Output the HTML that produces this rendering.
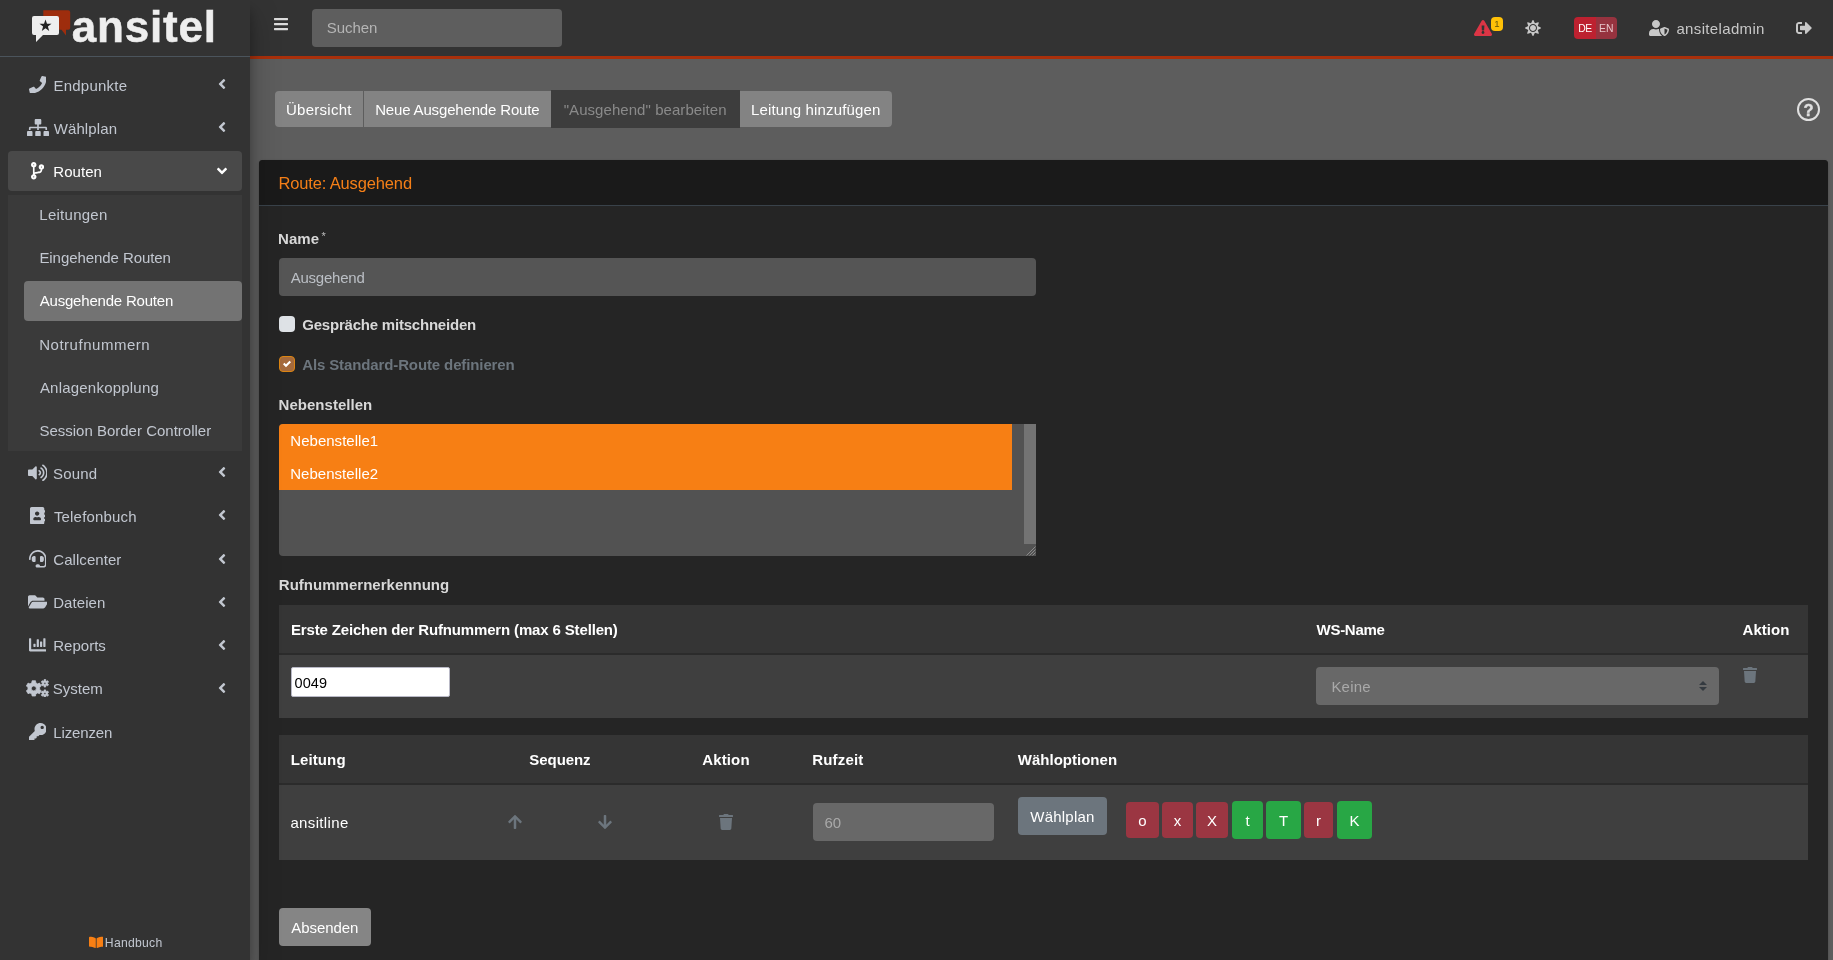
<!DOCTYPE html>
<html lang="de">
<head>
<meta charset="utf-8">
<title>ansitel - Ausgehende Routen</title>
<style>
*{box-sizing:border-box}
html,body{margin:0;padding:0}
body{width:1833px;height:960px;overflow:hidden;position:relative;background:#5d5d5d;font-family:"Liberation Sans",sans-serif;font-size:15px;line-height:24px;color:#fff}
#root{position:absolute;left:0;top:0;width:1833px;height:960px;overflow:hidden;will-change:transform}
svg{display:block}
.abs{position:absolute}
.f{position:relative;white-space:nowrap;display:inline-block}
/* ---------- sidebar ---------- */
#sidebar{position:absolute;left:0;top:0;width:250px;height:960px;background:#333;z-index:20;box-shadow:0 14px 28px rgba(0,0,0,.25),0 10px 10px rgba(0,0,0,.22)}
#brand{position:absolute;left:0;top:0;width:250px;height:57px;border-bottom:1px solid #4b545c}
#brand .word{position:absolute;left:72px;top:-1px;font-weight:bold;font-size:44px;line-height:56px;color:#eee;-webkit-text-stroke:0.5px #eee}
#brand svg{position:absolute;left:31px;top:9px}
.nav{position:absolute;left:8px;top:65px;width:234px;margin:0;padding:0;list-style:none}
.nav li{position:relative;height:40px;margin-bottom:3.2px;border-radius:4px;color:#c2c7d0}
.nav li .t{position:absolute;left:45.6px;top:8.5px;line-height:24px;white-space:nowrap}
.nav li .ic{position:absolute;left:16.8px;top:-0.5px;width:25.6px;height:40px;display:flex;align-items:center;justify-content:center}
.nav li svg{fill:#c2c7d0;stroke:#c2c7d0;stroke-width:0}
.nav li .ar{position:absolute;right:16px;top:11.2px}
.nav li.open{background:#494949;color:#fff}
.nav li.open svg{fill:#fff}
.tree{position:absolute;left:8px;top:194.6px;width:234px;height:256px;background:#3a3a3a;margin:0;padding:0;list-style:none}
.tree li{position:absolute;left:16px;width:218px;height:40px;border-radius:4px;color:#c2c7d0}
.tree li .t{position:absolute;left:16px;top:8.5px;white-space:nowrap}
.tree li.act{background:#737373;color:#fff}
#hand{position:absolute;left:88.5px;top:933.7px;font-size:12.2px;line-height:18px;color:#c2c7d0;white-space:nowrap}
#hand .t{position:absolute;left:17px;top:0}
/* ---------- navbar ---------- */
#navbar{position:absolute;left:250px;top:0;width:1583px;height:59px;background:#333;border-bottom:3px solid #a9300b;z-index:10}
#search{position:absolute;left:62px;top:9px;width:250px;height:38px;border-radius:4px;background:#5e5e5e;color:#b5b5b5}
#search .t{position:absolute;left:15px;top:6.5px}
#nbadge{position:absolute;left:1241px;top:17px;width:12px;height:14px;border-radius:4px;background:#ffc107;color:#66560a;font-size:9.6px;line-height:13px;text-align:center}
#lang{position:absolute;left:1324px;top:17px;width:43px;height:22px;border-radius:4px;overflow:hidden;font-size:10.4px;line-height:22px;color:#fff}
#lang b{position:absolute;left:0;top:0;width:22px;height:22px;background:#bd2130;font-weight:normal}
#lang i{position:absolute;left:22px;top:0;width:21px;height:22px;background:#96333f;font-style:normal;color:#e6c4c8}
#lang .f{position:absolute;left:4px;top:0.5px}
#uname{position:absolute;left:1426px;top:16.5px;line-height:24px;color:#c8c8c8;white-space:nowrap}
#help{position:absolute;left:1797px;top:97.5px;width:23px;height:23px;border:2.4px solid #e0e0e0;border-radius:50%;color:#e0e0e0;font-weight:bold;font-size:16.5px;line-height:20px;text-align:center;-webkit-text-stroke:0.4px #e0e0e0}
/* ---------- content ---------- */
.tab{position:absolute;top:91px;height:36px;background:#838383;color:#fff}
.tab .f{position:absolute;top:7px}
.tab.cur{top:90px;height:38px;background:#3d3d3d;color:#8a8a8a}
.tab.cur .f{top:8px}
#card{position:absolute;left:259px;top:160px;width:1569px;height:820px;background:#252525;border-radius:4px;box-shadow:0 0 1px rgba(0,0,0,.125),0 1px 3px rgba(0,0,0,.2)}
#card .hd{position:absolute;left:0;top:0;width:100%;height:46px;background:#1a1a1a;border-bottom:1px solid #39424a;border-radius:4px 4px 0 0}
#card .hd .f{position:absolute;left:20px;top:10.5px;font-size:16.5px;line-height:24px;color:#f57f17}
.lbl{position:absolute;font-weight:bold;color:#d8d8d8;white-space:nowrap;line-height:24px}
.inp{position:absolute;background:#555;border-radius:4px;color:#bbbfc5;line-height:24px}
.inp .f{position:absolute;left:12px;top:7.5px}
.star{position:absolute;left:42.5px;top:-2.5px;font-weight:normal;font-size:11px;color:#bdbdbd}
.cb{position:absolute;width:16px;height:16px;border-radius:4px;background:#dee2e6}
.cb.on{background:#a56a3c;border:1px solid #dc8512}
.cb.on svg{position:absolute;left:3px;top:3px}
#multi{position:absolute;left:279px;top:424px;width:757px;height:132px;background:#525252;border-radius:4px 0 0 4px;overflow:hidden}
#multi .opt{position:absolute;left:0;width:733px;height:33px;background:#f77f14;color:#fff;line-height:24px}
#multi .opt .f{position:absolute;left:12px;top:5px}
#multi .track{position:absolute;left:745px;top:0;width:12px;height:120px;background:#737373}
#multi .rsz{position:absolute;left:745px;top:120px}
.th{position:absolute;height:50px;background:#353535;border-bottom:2px solid #2b2b2b}
.th .f{position:absolute;top:12.5px;font-weight:bold;color:#fff;line-height:24px}
.tr{position:absolute;background:#3f3f3f}
#num{position:absolute;left:291px;top:667px;width:159px;height:30px;background:#fff;border:1px solid #b9b9c6;border-radius:2px;color:#000;line-height:24px;font-size:14.5px}
#num .f{position:absolute;left:3px;top:2.5px}
.inp.sel{background:#686868;color:#a9a9a9}
.inp.sel .f{left:16px;top:7.5px}
.btn2{position:absolute;height:38px;border-radius:4px;background:#6c757d;color:#fff;line-height:24px}
.btn2 .f{position:absolute;left:12px;top:7.5px}
.bdg{position:absolute;top:802px;height:36px;border-radius:4px;color:#fff;text-align:center;line-height:37px}
.red{background:#9b3642}.grn{background:#28a745;top:801px;height:38px;line-height:39px}
</style>
</head>
<body>
<div id="root">

<div id="sidebar">
  <div id="brand">
    <svg width="42" height="36" viewBox="0 0 42 36">
      <path d="M12.300 1.200h24.900a2 2 0 0 1 2 2v15.600a2 2 0 0 1-2 2H35v5.700l-4.500-5.700H12.300z" fill="#9e2d0d"/>
      <path d="M3 7h23a2 2 0 0 1 2 2v15a2 2 0 0 1-2 2H12l-7 7v-7H3a2 2 0 0 1-2-2V9a2 2 0 0 1 2-2z" fill="#eee"/>
      <path d="M14.500 10.500l1.500 4.300h4.500l-3.600 2.700 1.300 4.400-3.700-2.600-3.700 2.600 1.300-4.400-3.600-2.700h4.500z" fill="#222"/>
    </svg>
    <span class="word"><span class="f" style="letter-spacing:0.79px;margin-left:-0.2px">ansitel</span></span>
  </div>
  <ul class="nav">
    <li><span class="ic"><svg width="17.6" height="17.6" viewBox="0 0 512 512"><path d="M493.4 24.600l-104-24c-11.300-2.600-22.900 3.300-27.500 13.900l-48 112c-4.200 9.800-1.400 21.300 6.900 28l60.600 49.600c-36 76.700-98.900 140.500-177.200 177.200l-49.600-60.600c-6.800-8.300-18.200-11.100-28-6.900l-112 48C3.900 366.500-2 378.100.600 389.400l24 104C27.100 504.200 36.700 512 48 512c256.100 0 464-207.500 464-464 0-11.200-7.700-20.900-18.600-23.400z"/></svg></span><span class="t"><span class="f" style="letter-spacing:0.24px;margin-left:-0.2px">Endpunkte</span></span><svg class="ar" width="8.0" height="16" viewBox="0 0 256 512"><path d="M31.7 239l136-136c9.4-9.4 24.6-9.4 33.900 0l22.600 22.600c9.400 9.400 9.400 24.600 0 33.900L127.900 256l96.400 96.400c9.400 9.400 9.400 24.600 0 33.900L201.700 409c-9.400 9.400-24.600 9.400-33.900 0l-136-136c-9.500-9.400-9.500-24.600-.1-34z"/></svg></li>
    <li><span class="ic"><svg width="22.0" height="17.6" viewBox="0 0 640 512"><path d="M128 352H32c-17.670 0-32 14.330-32 32v96c0 17.670 14.330 32 32 32h96c17.670 0 32-14.330 32-32v-96c0-17.670-14.330-32-32-32zm-24-80h192v48h48v-48h192v48h48v-57.590c0-21.170-17.230-38.410-38.410-38.410H344v-64h40c17.670 0 32-14.330 32-32V32c0-17.670-14.330-32-32-32H256c-17.670 0-32 14.330-32 32v96c0 17.670 14.330 32 32 32h40v64H94.410C73.230 224 56 241.230 56 262.410V320h48v-48zm264 80h-96c-17.670 0-32 14.330-32 32v96c0 17.670 14.330 32 32 32h96c17.670 0 32-14.330 32-32v-96c0-17.670-14.330-32-32-32zm240 0h-96c-17.670 0-32 14.330-32 32v96c0 17.670 14.330 32 32 32h96c17.670 0 32-14.330 32-32v-96c0-17.670-14.330-32-32-32z"/></svg></span><span class="t"><span class="f" style="letter-spacing:0.11px;margin-left:0.1px">Wählplan</span></span><svg class="ar" width="8.0" height="16" viewBox="0 0 256 512"><path d="M31.7 239l136-136c9.4-9.4 24.6-9.4 33.900 0l22.600 22.600c9.400 9.400 9.400 24.600 0 33.900L127.900 256l96.400 96.400c9.400 9.400 9.400 24.600 0 33.900L201.700 409c-9.400 9.400-24.600 9.400-33.900 0l-136-136c-9.500-9.400-9.500-24.600-.1-34z"/></svg></li>
    <li class="open"><span class="ic"><svg width="13.2" height="17.6" viewBox="0 0 384 512"><path d="M384 144c0-44.200-35.800-80-80-80s-80 35.800-80 80c0 36.400 24.300 67.100 57.500 76.800-.6 16.100-4.200 28.500-11 36.900-15.400 19.200-49.300 22.400-85.200 25.700-28.200 2.600-57.400 5.400-81.300 16.900v-144c32.500-10.200 56-40.500 56-76.300 0-44.200-35.800-80-80-80S0 35.800 0 80c0 35.800 23.500 66.100 56 76.300v199.300C23.500 365.900 0 396.200 0 432c0 44.200 35.800 80 80 80s80-35.800 80-80c0-34-21.200-63.100-51.200-74.600 3.100-5.200 7.800-9.800 14.900-13.400 16.200-8.200 40.400-10.400 66.100-12.800 42.200-3.900 90-8.400 118.200-43.400 14-17.400 21.100-39.800 21.600-67.900 31.600-10.800 54.400-40.700 54.400-75.900zM80 64c8.800 0 16 7.200 16 16s-7.200 16-16 16-16-7.200-16-16 7.200-16 16-16zm0 384c-8.800 0-16-7.200-16-16s7.200-16 16-16 16 7.200 16 16-7.200 16-16 16zm224-320c8.800 0 16 7.200 16 16s-7.200 16-16 16-16-7.200-16-16 7.200-16 16-16z"/></svg></span><span class="t"><span class="f" style="letter-spacing:0.05px;margin-left:-0.3px">Routen</span></span><svg class="ar" style="transform:rotate(-90deg)" width="8.0" height="16" viewBox="0 0 256 512"><path d="M31.7 239l136-136c9.4-9.4 24.6-9.4 33.900 0l22.600 22.600c9.400 9.400 9.400 24.600 0 33.900L127.900 256l96.400 96.400c9.400 9.400 9.400 24.600 0 33.900L201.700 409c-9.400 9.400-24.600 9.400-33.900 0l-136-136c-9.500-9.400-9.500-24.600-.1-34z"/></svg></li>
  </ul>
  <ul class="tree">
    <li style="top:0"><span class="t"><span class="f" style="letter-spacing:0.26px;margin-left:-0.7px">Leitungen</span></span></li>
    <li style="top:43.2px"><span class="t"><span class="f" style="letter-spacing:-0.07px;margin-left:-0.6px">Eingehende Routen</span></span></li>
    <li style="top:86.4px" class="act"><span class="t"><span class="f" style="letter-spacing:-0.20px;margin-left:-0.3px">Ausgehende Routen</span></span></li>
    <li style="top:129.6px"><span class="t"><span class="f" style="letter-spacing:0.52px;margin-left:-0.8px">Notrufnummern</span></span></li>
    <li style="top:172.8px"><span class="t"><span class="f" style="letter-spacing:0.21px;margin-left:-0.1px">Anlagenkopplung</span></span></li>
    <li style="top:216px"><span class="t"><span class="f" style="margin-left:-0.6px">Session Border Controller</span></span></li>
  </ul>
  <ul class="nav" style="top:453px">
    <li><span class="ic"><svg width="19.8" height="17.6" viewBox="0 0 576 512"><path d="M215.030 71.050L126.060 160H24c-13.260 0-24 10.740-24 24v144c0 13.250 10.740 24 24 24h102.060l88.970 88.950c15.030 15.030 40.970 4.470 40.970-16.970V88.020c0-21.460-25.960-31.980-40.970-16.970zm233.320-51.080c-11.170-7.330-26.180-4.240-33.510 6.950-7.340 11.170-4.220 26.180 6.950 33.510 66.270 43.490 105.820 116.600 105.820 195.580 0 78.980-39.550 152.090-105.820 195.580-11.170 7.320-14.290 22.340-6.950 33.500 7.040 10.710 21.930 14.560 33.510 6.950C528.270 439.580 576 351.330 576 256S528.270 72.430 448.350 19.970zM480 256c0-63.530-32.060-121.940-85.770-156.240-11.190-7.140-26.030-3.820-33.120 7.460s-3.780 26.210 7.410 33.360C408.270 165.970 432 209.110 432 256s-23.730 90.030-63.480 115.420c-11.190 7.140-14.500 22.070-7.410 33.360 6.510 10.360 21.120 15.140 33.120 7.460C447.940 377.940 480 319.540 480 256zm-141.770-76.870c-11.580-6.330-26.190-2.160-32.610 9.450-6.390 11.610-2.160 26.200 9.450 32.610C327.980 228.280 336 241.630 336 256c0 14.380-8.020 27.720-20.920 34.810-11.610 6.410-15.840 21-9.450 32.610 6.430 11.660 21.050 15.800 32.610 9.450 28.230-15.550 45.770-45 45.770-76.880s-17.540-61.320-45.780-76.860z"/></svg></span><span class="t"><span class="f" style="letter-spacing:0.21px;margin-left:-0.6px">Sound</span></span><svg class="ar" width="8.0" height="16" viewBox="0 0 256 512"><path d="M31.7 239l136-136c9.4-9.4 24.6-9.4 33.900 0l22.600 22.600c9.400 9.400 9.400 24.600 0 33.900L127.900 256l96.400 96.400c9.400 9.400 9.400 24.600 0 33.900L201.700 409c-9.400 9.400-24.600 9.400-33.900 0l-136-136c-9.500-9.400-9.500-24.600-.1-34z"/></svg></li>
    <li><span class="ic"><svg width="15.4" height="17.6" viewBox="0 0 448 512"><path d="M436 160c6.600 0 12-5.400 12-12v-40c0-6.600-5.400-12-12-12h-20V48c0-26.500-21.500-48-48-48H48C21.500 0 0 21.500 0 48v416c0 26.500 21.500 48 48 48h320c26.500 0 48-21.500 48-48v-48h20c6.600 0 12-5.400 12-12v-40c0-6.600-5.400-12-12-12h-20v-64h20c6.600 0 12-5.400 12-12v-40c0-6.600-5.400-12-12-12h-20v-64h20zm-228-32c35.300 0 64 28.700 64 64s-28.700 64-64 64-64-28.700-64-64 28.700-64 64-64zm112 236.800c0 10.600-10 19.200-22.400 19.200H118.400C106 384 96 375.400 96 364.800v-19.200c0-31.800 30.100-57.600 67.200-57.600h5c12.300 5.100 25.700 8 39.800 8s27.600-2.900 39.800-8h5c37.100 0 67.200 25.800 67.200 57.600v19.200z"/></svg></span><span class="t"><span class="f" style="letter-spacing:0.18px;margin-left:0.3px">Telefonbuch</span></span><svg class="ar" width="8.0" height="16" viewBox="0 0 256 512"><path d="M31.7 239l136-136c9.4-9.4 24.6-9.4 33.900 0l22.600 22.600c9.400 9.400 9.400 24.600 0 33.900L127.900 256l96.400 96.400c9.400 9.400 9.400 24.600 0 33.900L201.700 409c-9.400 9.400-24.600 9.400-33.900 0l-136-136c-9.500-9.400-9.500-24.600-.1-34z"/></svg></li>
    <li><span class="ic"><svg width="17.6" height="17.6" viewBox="0 0 512 512"><path d="M192 208c0-17.670-14.330-32-32-32h-16c-35.350 0-64 28.650-64 64v48c0 35.350 28.650 64 64 64h16c17.670 0 32-14.330 32-32V208zm176 144c35.350 0 64-28.650 64-64v-48c0-35.350-28.650-64-64-64h-16c-17.670 0-32 14.330-32 32v112c0 17.670 14.330 32 32 32h16zM256 0C113.180 0 4.580 118.830 0 256v16c0 8.840 7.160 16 16 16h16c8.840 0 16-7.160 16-16v-16c0-114.690 93.310-208 208-208s208 93.310 208 208h-.12c.08 2.430.12 165.720.12 165.720 0 23.350-18.930 42.280-42.280 42.280H320c0-26.510-21.490-48-48-48h-32c-26.510 0-48 21.490-48 48s21.490 48 48 48h181.720c49.860 0 90.280-40.420 90.280-90.280V256C507.420 118.830 398.820 0 256 0z"/></svg></span><span class="t"><span class="f" style="letter-spacing:0.05px;margin-left:-0.3px">Callcenter</span></span><svg class="ar" width="8.0" height="16" viewBox="0 0 256 512"><path d="M31.7 239l136-136c9.4-9.4 24.6-9.4 33.900 0l22.600 22.600c9.400 9.400 9.400 24.600 0 33.900L127.900 256l96.400 96.400c9.400 9.400 9.400 24.600 0 33.900L201.700 409c-9.400 9.400-24.600 9.400-33.900 0l-136-136c-9.500-9.400-9.500-24.600-.1-34z"/></svg></li>
    <li><span class="ic"><svg width="19.8" height="17.6" viewBox="0 0 576 512"><path d="M572.694 292.093L500.270 416.248A63.997 63.997 0 0 1 444.989 448H45.025c-18.523 0-30.064-20.093-20.731-36.093l72.424-124.155A64 64 0 0 1 152 256h399.964c18.523 0 30.064 20.093 20.730 36.093zM152 224h328v-48c0-26.510-21.490-48-48-48H272l-64-64H48C21.490 64 0 85.490 0 112v278.046l69.077-118.418C86.214 242.250 117.989 224 152 224z"/></svg></span><span class="t"><span class="f" style="letter-spacing:0.06px;margin-left:-0.4px">Dateien</span></span><svg class="ar" width="8.0" height="16" viewBox="0 0 256 512"><path d="M31.7 239l136-136c9.4-9.4 24.6-9.4 33.900 0l22.600 22.600c9.400 9.400 9.400 24.600 0 33.900L127.900 256l96.400 96.400c9.400 9.400 9.400 24.600 0 33.900L201.700 409c-9.400 9.400-24.600 9.400-33.900 0l-136-136c-9.500-9.400-9.500-24.600-.1-34z"/></svg></li>
    <li><span class="ic"><svg width="17.6" height="17.6" viewBox="0 0 512 512"><path d="M332.800 320h38.400c6.400 0 12.800-6.400 12.800-12.800V172.800c0-6.400-6.400-12.800-12.800-12.800h-38.400c-6.400 0-12.800 6.400-12.800 12.800v134.400c0 6.400 6.400 12.800 12.800 12.800zm96 0h38.400c6.400 0 12.800-6.400 12.800-12.800V76.800c0-6.400-6.400-12.800-12.800-12.800h-38.400c-6.400 0-12.800 6.400-12.800 12.800v230.400c0 6.400 6.400 12.800 12.800 12.800zm-288 0h38.400c6.400 0 12.800-6.400 12.800-12.800v-70.400c0-6.400-6.400-12.800-12.800-12.800h-38.400c-6.400 0-12.800 6.400-12.800 12.800v70.400c0 6.400 6.400 12.800 12.800 12.800zm96 0h38.400c6.400 0 12.800-6.400 12.800-12.800V108.800c0-6.400-6.400-12.800-12.800-12.800h-38.400c-6.400 0-12.800 6.400-12.800 12.800v198.400c0 6.400 6.400 12.800 12.800 12.800zM496 384H64V80c0-8.840-7.160-16-16-16H16C7.160 64 0 71.160 0 80v336c0 17.670 14.330 32 32 32h464c8.840 0 16-7.160 16-16v-32c0-8.840-7.160-16-16-16z"/></svg></span><span class="t"><span class="f" style="letter-spacing:0.02px;margin-left:-0.4px">Reports</span></span><svg class="ar" width="8.0" height="16" viewBox="0 0 256 512"><path d="M31.7 239l136-136c9.4-9.4 24.6-9.4 33.900 0l22.600 22.600c9.400 9.400 9.400 24.600 0 33.900L127.900 256l96.400 96.400c9.400 9.400 9.400 24.600 0 33.900L201.700 409c-9.400 9.400-24.600 9.400-33.900 0l-136-136c-9.500-9.400-9.500-24.600-.1-34z"/></svg></li>
    <li><span class="ic"><svg style="position:relative;left:-0.4px;top:-0.2px" width="23" height="18" viewBox="0 0 23 18"><path fill-rule="evenodd" stroke-linejoin="round" stroke-width="0.8" d="M9.80 3.85L9.50 1.79L6.10 1.79L5.80 3.85L3.99 4.89L2.06 4.12L0.36 7.07L1.99 8.36L1.99 10.44L0.36 11.73L2.06 14.68L3.99 13.91L5.80 14.95L6.10 17.01L9.50 17.01L9.80 14.95L11.61 13.91L13.54 14.68L15.24 11.73L13.61 10.44L13.61 8.36L15.24 7.07L13.54 4.12L11.61 4.89ZM5.30 9.40a2.50 2.50 0 1 0 5.00 0a2.50 2.50 0 1 0 -5.00 0ZM19.78 1.85L19.69 0.58L18.11 0.58L18.02 1.85L17.22 2.31L16.08 1.76L15.29 3.13L16.34 3.84L16.34 4.76L15.29 5.47L16.08 6.84L17.22 6.29L18.02 6.75L18.11 8.02L19.69 8.02L19.78 6.75L20.58 6.29L21.72 6.84L22.51 5.47L21.46 4.76L21.46 3.84L22.51 3.13L21.72 1.76L20.58 2.31ZM17.80 4.30a1.10 1.10 0 1 0 2.20 0a1.10 1.10 0 1 0 -2.20 0ZM19.78 12.15L19.69 10.88L18.11 10.88L18.02 12.15L17.22 12.61L16.08 12.06L15.29 13.43L16.34 14.14L16.34 15.06L15.29 15.77L16.08 17.14L17.22 16.59L18.02 17.05L18.11 18.32L19.69 18.32L19.78 17.05L20.58 16.59L21.72 17.14L22.51 15.77L21.46 15.06L21.46 14.14L22.51 13.43L21.72 12.06L20.58 12.61ZM17.80 14.60a1.10 1.10 0 1 0 2.20 0a1.10 1.10 0 1 0 -2.20 0Z"/></svg></span><span class="t"><span class="f" style="margin-left:-0.8px">System</span></span><svg class="ar" width="8.0" height="16" viewBox="0 0 256 512"><path d="M31.7 239l136-136c9.4-9.4 24.6-9.4 33.900 0l22.600 22.600c9.400 9.400 9.400 24.600 0 33.900L127.900 256l96.400 96.400c9.400 9.400 9.400 24.600 0 33.900L201.700 409c-9.400 9.400-24.600 9.400-33.900 0l-136-136c-9.500-9.400-9.500-24.600-.1-34z"/></svg></li>
    <li><span class="ic"><svg width="17.6" height="17.6" viewBox="0 0 512 512"><path d="M512 176.001C512 273.203 433.202 352 336 352c-11.220 0-22.190-1.062-32.827-3.069l-24.012 27.014A23.999 23.999 0 0 1 261.223 384H224v40c0 13.255-10.745 24-24 24h-40v40c0 13.255-10.745 24-24 24H24c-13.255 0-24-10.745-24-24v-78.059c0-6.365 2.529-12.470 7.029-16.971l161.802-161.802C163.108 213.814 160 195.271 160 176 160 78.798 238.797.001 335.999 0 433.488-.001 512 78.511 512 176.001zM336 128c0 26.510 21.490 48 48 48s48-21.490 48-48-21.490-48-48-48-48 21.490-48 48z"/></svg></span><span class="t"><span class="f" style="letter-spacing:-0.12px;margin-left:-0.4px">Lizenzen</span></span></li>
  </ul>
  <div id="hand"><svg style="position:absolute;left:0;top:2px" width="14.4" height="12.8" viewBox="0 0 576 512"><path fill="#f77f14" d="M542.220 32.050c-54.800 3.110-163.720 14.430-230.960 55.590-4.640 2.840-7.270 7.890-7.270 13.170v363.870c0 11.550 12.630 18.850 23.280 13.490 69.180-34.820 169.230-44.320 218.700-46.920 16.890-.89 30.020-14.430 30.020-30.660V62.750c.01-17.710-15.350-31.740-33.770-30.700zM264.730 87.640C197.500 46.480 88.580 35.170 33.780 32.050 15.360 31.010 0 45.040 0 62.750V400.600c0 16.240 13.130 29.780 30.020 30.660 49.490 2.600 149.590 12.110 218.770 46.950 10.620 5.350 23.210-1.940 23.210-13.460V100.630c0-5.290-2.620-10.140-7.270-12.990z"/></svg><span class="t"><span class="f" style="letter-spacing:0.27px;margin-left:-0.7px">Handbuch</span></span></div>
</div>

<div id="navbar">
  <svg style="position:absolute;left:24px;top:16px" width="14.0" height="16" viewBox="0 0 448 512"><path fill="#dcdcdc" d="M16 132h416c8.837 0 16-7.163 16-16V76c0-8.837-7.163-16-16-16H16C7.163 60 0 67.163 0 76v40c0 8.837 7.163 16 16 16zm0 160h416c8.837 0 16-7.163 16-16v-40c0-8.837-7.163-16-16-16H16c-8.837 0-16 7.163-16 16v40c0 8.837 7.163 16 16 16zm0 160h416c8.837 0 16-7.163 16-16v-40c0-8.837-7.163-16-16-16H16c-8.837 0-16 7.163-16 16v40c0 8.837 7.163 16 16 16z"/></svg>
  <div id="search"><span class="t"><span class="f" style="letter-spacing:-0.03px;margin-left:-0.3px">Suchen</span></span></div>
  <svg style="position:absolute;left:1224.1px;top:20px" width="18.0" height="16" viewBox="0 0 576 512"><path fill="#dc3545" d="M569.517 440.013C587.975 472.007 564.806 512 527.940 512H48.054c-36.937 0-59.999-40.055-41.577-71.987L246.423 23.985c18.467-32.009 64.720-31.951 83.154 0l239.940 416.028zM288 354c-25.405 0-46 20.595-46 46s20.595 46 46 46 46-20.595 46-46-20.595-46-46-46zm-43.673-165.346l7.418 136c.347 6.364 5.609 11.346 11.982 11.346h48.546c6.373 0 11.635-4.982 11.982-11.346l7.418-136c.375-6.874-5.098-12.654-11.982-12.654h-63.383c-6.884 0-12.356 5.780-11.981 12.654z"/></svg>
  <div id="nbadge">1</div>
  <svg style="position:absolute;left:1275.1px;top:20px" width="16.0" height="16" viewBox="0 0 512 512"><path fill="#c8c8c8" d="M256 160c-52.900 0-96 43.100-96 96s43.100 96 96 96 96-43.100 96-96-43.100-96-96-96zm246.400 80.500l-94.700-47.300 33.500-100.400c4.500-13.600-8.400-26.500-21.900-21.900l-100.400 33.500-47.400-94.800c-6.400-12.800-24.600-12.800-31 0l-47.300 94.700L92.700 70.800c-13.600-4.500-26.500 8.400-21.900 21.900l33.500 100.400-94.700 47.400c-12.800 6.400-12.800 24.600 0 31l94.700 47.300-33.500 100.500c-4.500 13.600 8.400 26.500 21.900 21.900l100.400-33.500 47.300 94.700c6.400 12.800 24.600 12.800 31 0l47.300-94.700 100.400 33.500c13.600 4.500 26.500-8.400 21.900-21.900l-33.500-100.400 94.700-47.300c13-6.500 13-24.700.2-31.100zm-155.900 106c-49.900 49.900-131.100 49.900-181 0-49.900-49.900-49.900-131.100 0-181 49.900-49.900 131.100-49.900 181 0 49.900 49.900 49.900 131.100 0 181z"/></svg>
  <div id="lang"><b><span class="f" style="letter-spacing:-0.50px;margin-left:0.3px">DE</span></b><i><span class="f" style="letter-spacing:-0.11px;margin-left:-0.9px">EN</span></i></div>
  <svg style="position:absolute;left:1399px;top:20px" width="20.0" height="16" viewBox="0 0 640 512"><path fill="#c8c8c8" d="M622.300 271.100l-115.200-45c-4.100-1.600-12.600-3.700-22.200 0l-115.200 45c-10.700 4.200-17.700 14-17.700 24.900 0 111.600 68.700 188.800 132.900 213.900 9.600 3.700 18 1.600 22.200 0C558.400 489.900 640 420.500 640 296c0-10.900-7-20.700-17.700-24.900zM496 462.400V273.300l95.500 37.300c-5.600 87.100-60.900 135.400-95.500 151.800zM224 256c70.700 0 128-57.300 128-128S294.700 0 224 0 96 57.300 96 128s57.300 128 128 128zm96 40c0-2.500.8-4.800 1.100-7.200-2.500-.1-4.900-.8-7.500-.8h-16.700c-22.200 10.200-46.900 16-72.900 16s-50.600-5.800-72.900-16h-16.700C60.200 288 0 348.200 0 422.400V464c0 26.500 21.500 48 48 48h352c6.800 0 13.300-1.500 19.200-4-54-42.900-99.200-116.700-99.200-212z"/></svg>
  <div id="uname"><span class="f" style="letter-spacing:0.35px;margin-left:0.4px">ansiteladmin</span></div>
  <svg style="position:absolute;left:1546px;top:20px" width="16.0" height="16" viewBox="0 0 512 512"><path fill="#c8c8c8" d="M497 273L329 441c-15 15-41 4.500-41-17v-96H152c-13.300 0-24-10.700-24-24v-96c0-13.300 10.700-24 24-24h136V88c0-21.400 25.900-32 41-17l168 168c9.300 9.400 9.300 24.600 0 34zM192 436v-40c0-6.600-5.400-12-12-12H96c-17.700 0-32-14.300-32-32V160c0-17.700 14.300-32 32-32h84c6.600 0 12-5.400 12-12V76c0-6.600-5.400-12-12-12H96c-53 0-96 43-96 96v192c0 53 43 96 96 96h84c6.600 0 12-5.400 12-12z"/></svg>
</div>
<div id="help">?</div>

<div class="tab" style="left:275px;width:88px;border-radius:4px 0 0 4px"><span class="f" style="letter-spacing:0.28px;margin-left:10.9px">Übersicht</span></div>
<div class="tab" style="left:364px;width:187px"><span class="f" style="letter-spacing:-0.16px;margin-left:11.2px">Neue Ausgehende Route</span></div>
<div class="tab cur" style="left:551px;width:189px"><span class="f" style="letter-spacing:0.06px;margin-left:12.7px">"Ausgehend" bearbeiten</span></div>
<div class="tab" style="left:740px;width:152px;border-radius:0 4px 4px 0"><span class="f" style="letter-spacing:0.15px;margin-left:11.0px">Leitung hinzufügen</span></div>

<div id="card">
  <div class="hd"><span class="f" style="letter-spacing:-0.14px;margin-left:-0.6px">Route: Ausgehend</span></div>
</div>

<!-- form -->
<div class="lbl" style="left:279px;top:226.5px"><span class="f" style="letter-spacing:0.07px;margin-left:-1.0px">Name</span><span class="star">*</span></div>
<div class="inp" style="left:279px;top:258px;width:757px;height:38px"><span class="f" style="letter-spacing:-0.23px;margin-left:-0.3px">Ausgehend</span></div>

<div class="cb" style="left:279px;top:316px"></div>
<div class="lbl" style="left:303px;top:312.5px"><span class="f" style="letter-spacing:-0.21px;margin-left:-0.8px">Gespräche mitschneiden</span></div>
<div class="cb on" style="left:279px;top:356px"><svg width="8" height="8" viewBox="0 0 8 8"><path fill="#fff" d="M6.564.750l-3.590 3.612-1.538-1.550L0 4.260l2.974 2.990L8 2.193z"/></svg></div>
<div class="lbl" style="left:303px;top:352.5px;color:#6c757d"><span class="f" style="letter-spacing:-0.12px;margin-left:-0.8px">Als Standard-Route definieren</span></div>

<div class="lbl" style="left:279px;top:392.5px"><span class="f" style="letter-spacing:0.02px;margin-left:-0.4px">Nebenstellen</span></div>
<div id="multi">
  <div class="opt" style="top:0"><span class="f" style="letter-spacing:0.02px;margin-left:-0.7px">Nebenstelle1</span></div>
  <div class="opt" style="top:33px"><span class="f" style="letter-spacing:0.03px;margin-left:-0.8px">Nebenstelle2</span></div>
  <div class="track"></div>
  <svg class="rsz" width="12" height="12" viewBox="0 0 12 12"><path d="M11.500 2.500l-9 9M11.500 5.500l-6 6M11.500 8.500l-3 3" stroke="#8a8a8a" stroke-width="1" fill="none"/></svg>
</div>

<div class="lbl" style="left:279px;top:572.5px"><span class="f" style="letter-spacing:0.02px;margin-left:-0.2px">Rufnummernerkennung</span></div>

<!-- table 1 -->
<div class="th" style="left:279px;top:605px;width:1529px">
  <span class="f" style="letter-spacing:-0.15px;margin-left:11.9px">Erste Zeichen der Rufnummern (max 6 Stellen)</span>
  <span class="f" style="letter-spacing:-0.30px;margin-left:1037.6px">WS-Name</span>
  <span class="f" style="letter-spacing:0.06px;margin-left:1463.5px">Aktion</span>
</div>
<div class="tr" style="left:279px;top:655px;width:1529px;height:63px"></div>
<div id="num"><span class="f" style="letter-spacing:0.05px;margin-left:-0.4px">0049</span></div>
<div class="inp sel" style="left:1316px;top:667px;width:403px;height:38px"><span class="f" style="letter-spacing:0.19px;margin-left:-0.6px">Keine</span>
  <svg width="8" height="10" viewBox="0 0 4 5" style="position:absolute;right:12px;top:14px"><path fill="#343a40" d="M2 0L0 2h4zm0 5L0 3h4z"/></svg>
</div>
<svg class="abs" style="left:1743px;top:667px" width="14.0" height="16" viewBox="0 0 448 512"><path fill="#6c757d" d="M432 32H312l-9.400-18.700A24 24 0 0 0 281.100 0H166.800a23.720 23.720 0 0 0-21.400 13.300L136 32H16A16 16 0 0 0 0 48v32a16 16 0 0 0 16 16h416a16 16 0 0 0 16-16V48a16 16 0 0 0-16-16zM53.200 467a48 48 0 0 0 47.900 45h245.800a48 48 0 0 0 47.900-45L416 128H32z"/></svg>

<!-- table 2 -->
<div class="th" style="left:279px;top:735px;width:1529px">
  <span class="f" style="letter-spacing:0.12px;margin-left:11.7px">Leitung</span>
  <span class="f" style="letter-spacing:-0.06px;margin-left:250.3px">Sequenz</span>
  <span class="f" style="letter-spacing:0.15px;margin-left:423.2px">Aktion</span>
  <span class="f" style="letter-spacing:0.15px;margin-left:533.3px">Rufzeit</span>
  <span class="f" style="letter-spacing:0.01px;margin-left:738.8px">Wähloptionen</span>
</div>
<div class="tr" style="left:279px;top:785px;width:1529px;height:75px"></div>
<div class="abs" style="left:291px;top:810.5px;line-height:24px;color:#fff"><span class="f" style="letter-spacing:0.35px;margin-left:-0.6px">ansitline</span></div>
<svg class="abs" style="left:507.5px;top:814px" width="14.0" height="16" viewBox="0 0 448 512"><path fill="#6c757d" d="M34.900 289.500l-22.200-22.200c-9.400-9.400-9.400-24.600 0-33.900L207 39c9.400-9.400 24.600-9.400 33.900 0l194.300 194.300c9.400 9.400 9.400 24.600 0 33.900L413 289.400c-9.500 9.500-25 9.300-34.300-.4L264 168.600V456c0 13.300-10.700 24-24 24h-32c-13.300 0-24-10.700-24-24V168.600L69.200 289.100c-9.300 9.800-24.800 10-34.300.4z"/></svg>
<svg class="abs" style="left:598.3px;top:814px" width="14.0" height="16" viewBox="0 0 448 512"><path fill="#6c757d" d="M413.100 222.500l22.200 22.200c9.400 9.400 9.400 24.600 0 33.900L241 473c-9.400 9.400-24.600 9.400-33.900 0L12.700 278.600c-9.400-9.400-9.400-24.600 0-33.900l22.200-22.200c9.500-9.500 25-9.300 34.300.4L184 343.400V56c0-13.300 10.700-24 24-24h32c13.300 0 24 10.700 24 24v287.400l114.800-120.500c9.300-9.800 24.800-10 34.300-.4z"/></svg>
<svg class="abs" style="left:718.8px;top:814px" width="14.0" height="16" viewBox="0 0 448 512"><path fill="#6c757d" d="M432 32H312l-9.400-18.700A24 24 0 0 0 281.100 0H166.800a23.720 23.720 0 0 0-21.400 13.300L136 32H16A16 16 0 0 0 0 48v32a16 16 0 0 0 16 16h416a16 16 0 0 0 16-16V48a16 16 0 0 0-16-16zM53.200 467a48 48 0 0 0 47.900 45h245.800a48 48 0 0 0 47.900-45L416 128H32z"/></svg>
<div class="inp sel" style="left:813px;top:803px;width:181px;height:38px"><span class="f" style="margin-left:-4.5px">60</span></div>
<div class="btn2" style="left:1018px;top:797px;width:89px"><span class="f" style="letter-spacing:0.22px;margin-left:0.3px">Wählplan</span></div>
<div class="bdg red" style="left:1126px;width:33px">o</div>
<div class="bdg red" style="left:1162px;width:31px">x</div>
<div class="bdg red" style="left:1196px;width:32px">X</div>
<div class="bdg grn" style="left:1232px;width:31px">t</div>
<div class="bdg grn" style="left:1266px;width:35px">T</div>
<div class="bdg red" style="left:1304px;width:29px">r</div>
<div class="bdg grn" style="left:1337px;width:35px">K</div>

<div class="btn2" style="left:279px;top:908px;width:92px;background:#858585"><span class="f" style="letter-spacing:-0.06px;margin-left:0.3px">Absenden</span></div>

</div>
</body>
</html>
